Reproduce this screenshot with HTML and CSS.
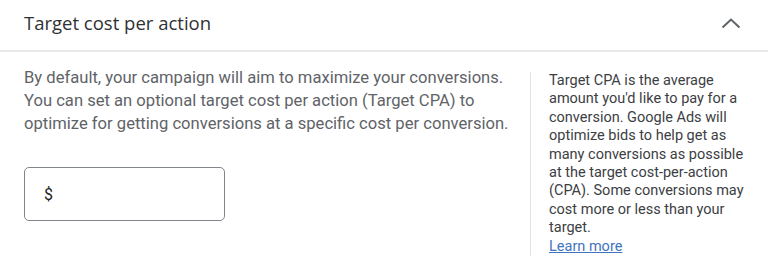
FILE: index.html
```html
<!DOCTYPE html>
<html lang="en">
<head>
<meta charset="utf-8">
<title>Target cost per action</title>
<link rel="stylesheet" href="styles.css">
</head>
<body>
<section class="panel">
  <header class="header">
    <h2 class="title">Target cost per action</h2>
    <button class="toggle" aria-label="Collapse">
      <svg width="20" height="12" viewBox="0 0 20 12" aria-hidden="true"><path d="M1.5 10.5 L10 2.5 L18.5 10.5" fill="none" stroke="#5f6368" stroke-width="2"/></svg>
    </button>
  </header>
  <div class="content">
    <div class="main">
      <p class="desc">By default, your campaign will aim to maximize your conversions. You can set an optional target cost per action (Target CPA) to optimize for getting conversions at a specific cost per conversion.</p>
      <label class="field">
        <span class="currency">$</span>
        <input class="amount" type="text" aria-label="Target CPA">
      </label>
    </div>
    <aside class="help">
      Target CPA is the average amount you'd like to pay for a conversion. Google Ads will optimize bids to help get as many conversions as possible at the target cost-per-action (CPA). Some conversions may cost more or less than your target.
      <a class="link" href="#">Learn more</a>
    </aside>
  </div>
</section>
</body>
</html>
```
FILE: styles.css
```css
* { box-sizing: border-box; }
html, body { margin: 0; background: #fff; }
body { font-family: Roboto, "Noto Sans", Arial, sans-serif; color: #3c4043; }

.header {
  height: 52px;
  display: flex;
  align-items: center;
  justify-content: space-between;
  padding: 0 24px 0 24px;
  border-bottom: 2px solid #e8e8e8;
}
.title {
  margin: 0;
  font-family: "Open Sans", Roboto, sans-serif;
  font-weight: 400;
  font-size: 18.5px;
  color: #303134;
  position: relative;
  top: -3px;
}
.toggle {
  background: none;
  border: 0;
  padding: 0;
  margin-right: 3px;
  display: flex;
  position: relative;
  top: -2px;
}

.content {
  display: flex;
  align-items: flex-start;
}
.main {
  width: 530px;
  padding: 14px 20px 0 24px;
}
.desc {
  margin: 0;
  font-size: 16.6px;
  line-height: 23px;
  color: #5f6368;
}
.field {
  margin-top: 32px;
  width: 201px;
  height: 54px;
  border: 1px solid #80868b;
  border-radius: 5px;
  display: flex;
  align-items: center;
  padding-left: 19px;
}
.currency { font-size: 16px; color: #202124; }
.amount {
  border: 0;
  outline: none;
  flex: 1;
  min-width: 0;
  font: inherit;
  background: transparent;
}

.help {
  margin-top: 20px;
  border-left: 1px solid #e3e3e3;
  padding-left: 18px;
  width: 218px;
  font-size: 14.5px;
  line-height: 18.4px;
  color: #3c4043;
}
.link {
  display: block;
  color: #3f74c0;
  text-decoration: underline;
}
```
